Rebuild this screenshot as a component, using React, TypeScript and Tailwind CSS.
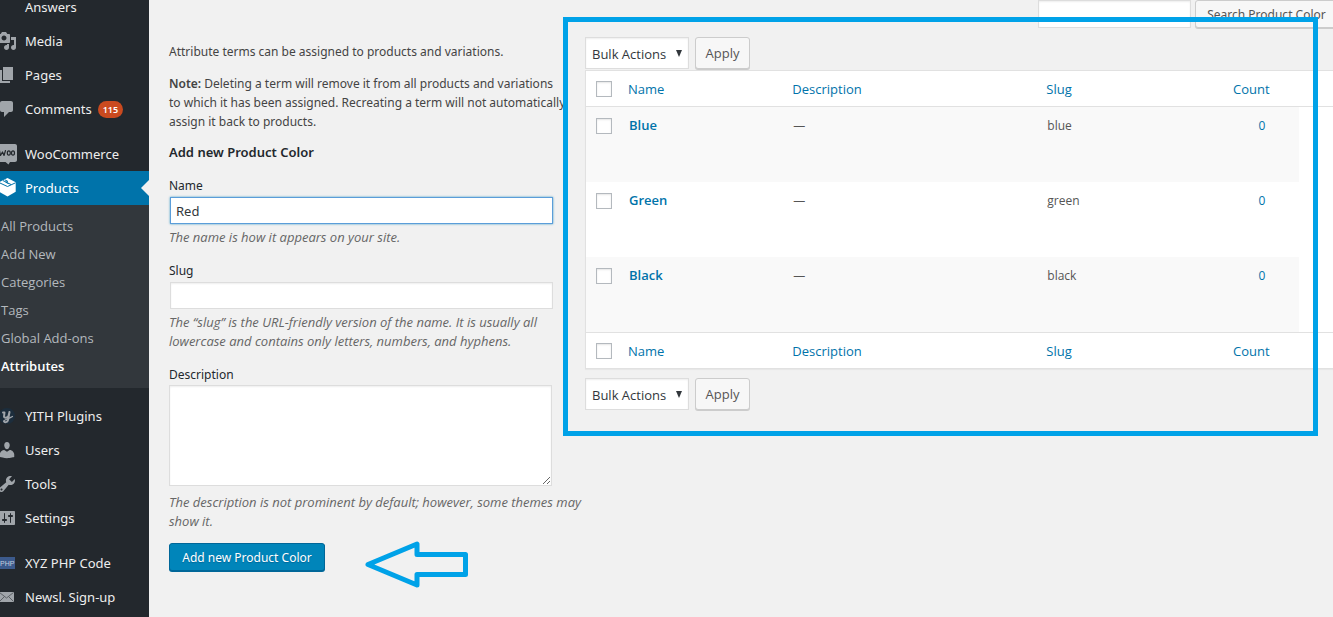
import type { ReactNode } from "react";

const path = (d: string) => <path fill="currentColor" fillRule="evenodd" d={d} />;

const icons: Record<string, ReactNode> = {
  media: path(
    "M13 11V4c0-.55-.45-1-1-1h-1.67L9 1H5L3.67 3H2c-.55 0-1 .45-1 1v7c0 .55.45 1 1 1h10c.55 0 1-.45 1-1zM7 4.5c1.38 0 2.5 1.12 2.5 2.5S8.38 9.5 7 9.5 4.5 8.38 4.5 7 5.62 4.5 7 4.5zM14 6h5v10.5c0 1.38-1.12 2.5-2.5 2.5S14 17.88 14 16.5s1.12-2.5 2.5-2.5c.17 0 .34.02.5.05V9h-3V6zm-4 8.05V13h2v3.5c0 1.38-1.12 2.5-2.5 2.5S7 17.88 7 16.5 8.12 14 9.5 14c.17 0 .34.02.5.05z",
  ),
  pages: path("M6 15V2h10v13H6zm-1 1h8v2H3V5h2v11z"),
  comments: path("M5 2h9c1.1 0 2 .9 2 2v7c0 1.1-.9 2-2 2h-2l-5 5v-5H5c-1.1 0-2-.9-2-2V4c0-1.1.9-2 2-2z"),
  woo: (
    <>
      <path fill="currentColor" d="M2 0h16c1.1 0 2 .9 2 2v14c0 1.1-.9 2-2 2h-5l-1.5 2.5L8.500 18H2c-1.1 0-2-.9-2-2V2C0 .9.9 0 2 0z" />
      <g fill="none" stroke="#23282d" strokeWidth="1.2" strokeLinejoin="round" strokeLinecap="round">
        <path d="M2.500 6.500l1 5 2-3.500 1.500 3.500L8.500 6.500" />
        <ellipse cx="11.8" cy="9" rx="1.5" ry="2.2" />
        <ellipse cx="16" cy="9" rx="1.5" ry="2.2" />
      </g>
    </>
  ),
  products: (
    <>
      <path fill="currentColor" d="M10.500 0L18.700 4.200v9.600L10.500 18.500 2.300 13.800V4.200z" />
      <path fill="none" stroke="#0073aa" strokeWidth="1" d="M2.500 4.800l8 3.700 8-3.700M6 2.600l8 3.900M7.800 1.800l3 1.500-2 1 3 1.400" />
    </>
  ),
  yith: (
    <>
      <circle cx="10" cy="10" r="8" fill="#1c2d3c" />
      <path
        fill="none"
        stroke="currentColor"
        strokeWidth="2"
        strokeLinecap="round"
        strokeLinejoin="round"
        d="M6 6.500h1.500l-.5 4c0 1.800 3.500 1.500 4.500-.5L12.500 6l-1.500 8c-.5 2.500-3.500 2.800-4 1.200"
      />
      <path fill="none" stroke="currentColor" strokeWidth="1.2" strokeLinecap="round" d="M7 15c.2-1.200 4-2 8.500-4.500" />
    </>
  ),
  users: path(
    "M10 9.250c-2.270 0-2.730-3.440-2.730-3.440C7 4.020 7.820 2 9.970 2c2.160 0 2.980 2.020 2.710 3.810 0 0-.41 3.440-2.680 3.440zm0 2.570L12.720 10c2.390 0 4.520 2.330 4.520 4.530v2.490s-3.650 1.130-7.240 1.130c-3.650 0-7.240-1.130-7.240-1.130v-2.490c0-2.250 1.940-4.480 4.470-4.480z",
  ),
  tools: path(
    "M16.680 9.770c-1.340 1.340-3.300 1.670-4.950.99l-5.410 6.520c-.99.99-2.590.99-3.580 0s-.99-2.590 0-3.570l6.520-5.420c-.68-1.650-.35-3.610.99-4.950 1.280-1.280 3.120-1.620 4.720-1.060l-2.890 2.890 2.820 2.820 2.860-2.870c.53 1.580.18 3.390-1.080 4.650zM3.810 16.210c.4.39 1.040.39 1.430 0 .4-.4.4-1.040 0-1.430-.39-.4-1.030-.4-1.430 0-.39.39-.39 1.030 0 1.430z",
  ),
  settings: path(
    "M18 16V4c0-.55-.45-1-1-1H3c-.55 0-1 .45-1 1v12c0 .55.45 1 1 1h14c.55 0 1-.45 1-1zM8 11h1c.55 0 1 .45 1 1s-.45 1-1 1H8v1.500c0 .28-.22.5-.5.5s-.5-.22-.5-.5V13H6c-.55 0-1-.45-1-1s.45-1 1-1h1V5.500c0-.28.22-.5.5-.5s.5.22.5.5V11zm5-2h-1c-.55 0-1-.45-1-1s.45-1 1-1h1V5.500c0-.28.22-.5.5-.5s.5.22.5.5V7h1c.55 0 1 .45 1 1s-.45 1-1 1h-1v5.500c0 .28-.22.5-.5.5s-.5-.22-.5-.5V9z",
  ),
  php: (
    <>
      <rect x="0" y="4" width="18" height="12" fill="#3c5a8c" />
      <text x="3" y="13" fontSize="7" fontFamily="Liberation Sans, sans-serif" fill="#c4cede">PHP</text>
    </>
  ),
  mail: (
    <>
      <rect x="2" y="5" width="15" height="10" fill="currentColor" />
      <path fill="none" stroke="#5b6065" d="M2.500 5.500l7 5.500 7-5.500M2.500 14.500l5-5M16.500 14.500l-5-5" />
    </>
  ),
};

function MenuItem({ icon, label, badge, active }: { icon?: string; label: string; badge?: string; active?: boolean }) {
  return (
    <li>
      <a
        href="#"
        className={
          active
            ? "relative flex h-[34px] items-center gap-2 bg-[#0073aa] text-white"
            : "relative flex h-[34px] items-center gap-2 text-[#eeeeee]"
        }
      >
        <svg
          viewBox="0 0 20 20"
          aria-hidden="true"
          className={
            active
              ? "-ml-[3px] size-5 shrink-0 overflow-visible"
              : "-ml-[3px] size-5 shrink-0 overflow-visible text-[#a0a5aa]"
          }
        >
          {icon ? icons[icon] : null}
        </svg>
        <span className="leading-[14px] whitespace-nowrap">{label}</span>
        {badge && (
          <span className="-ml-[2px] rounded-full bg-[#ca4a1f] px-[5px] text-[9px] leading-[17px] font-semibold text-white">
            {badge}
          </span>
        )}
        {active && (
          <span className="absolute top-1/2 right-0 -translate-y-1/2 border-y-8 border-r-8 border-y-transparent border-r-[#f1f1f1]" />
        )}
      </a>
    </li>
  );
}

const submenu = ["All Products", "Add New", "Categories", "Tags", "Global Add-ons"];

function Sidebar() {
  return (
    <nav
      aria-label="Admin menu"
      className="w-[149px] shrink-0 overflow-hidden bg-[#23282d] font-['Noto_Sans',sans-serif] text-[13px]"
    >
      <ul className="-mt-[10px]">
        <MenuItem label="Answers" />
        <MenuItem icon="media" label="Media" />
        <MenuItem icon="pages" label="Pages" />
        <MenuItem icon="comments" label="Comments" badge="115" />
      </ul>
      <ul className="mt-[11px]">
        <MenuItem icon="woo" label="WooCommerce" />
        <MenuItem icon="products" label="Products" active />
        <li>
          <ul className="bg-[#32373c] pt-[7px] pb-2 pl-px font-['Open_Sans',sans-serif] text-[13px] leading-7 text-[#b4b9be]">
            {submenu.map((s) => (
              <li key={s}>
                <a href="#">{s}</a>
              </li>
            ))}
            <li>
              <a href="#" className="font-semibold text-white">
                Attributes
              </a>
            </li>
          </ul>
        </li>
      </ul>
      <ul className="mt-[11px]">
        <MenuItem icon="yith" label="YITH Plugins" />
        <MenuItem icon="users" label="Users" />
        <MenuItem icon="tools" label="Tools" />
        <MenuItem icon="settings" label="Settings" />
      </ul>
      <ul className="mt-[11px]">
        <MenuItem icon="php" label="XYZ PHP Code" />
        <MenuItem icon="mail" label="Newsl. Sign-up" />
      </ul>
    </nav>
  );
}

function AddForm() {
  return (
    <section className="w-[404px] shrink-0 pt-[42px] font-['Noto_Sans',sans-serif] text-[12px] leading-[19px] whitespace-nowrap text-[#444444]">
      <p>Attribute terms can be assigned to products and variations.</p>
      <p className="mt-[13px]">
        <strong className="font-semibold">Note:</strong> Deleting a term will remove it from all products and variations
        <br />
        to which it has been assigned. Recreating a term will not automatically
        <br />
        assign it back to products.
      </p>
      <h2 className="mt-3 text-[13px] font-semibold text-[#23282d]">Add new Product Color</h2>
      <form onSubmit={(e) => e.preventDefault()}>
        <label htmlFor="tag-name" className="mt-[14px] block text-[#23282d]">
          Name
        </label>
        <input
          id="tag-name"
          defaultValue="Red"
          className="mt-0.5 ml-px block h-[27px] w-[383px] border border-[#5b9dd9] bg-white px-[5px] text-[13px] text-[#32373c] shadow-[0_0_2px_rgba(30,140,190,0.8)] outline-none"
        />
        <p className="mt-1 font-['Open_Sans',sans-serif] text-[13px] text-[#666666] italic">
          The name is how it appears on your site.
        </p>

        <label htmlFor="tag-slug" className="mt-[14px] block text-[#23282d]">
          Slug
        </label>
        <input
          id="tag-slug"
          className="mt-0.5 ml-px block h-[27px] w-[383px] border border-[#dddddd] bg-white px-[5px] text-[13px] text-[#32373c] shadow-[inset_0_1px_2px_rgba(0,0,0,0.07)] outline-none"
        />
        <p className="mt-1 font-['Open_Sans',sans-serif] text-[13px] text-[#666666] italic">
          The “slug” is the URL-friendly version of the name. It is usually all
          <br />
          lowercase and contains only letters, numbers, and hyphens.
        </p>

        <label htmlFor="tag-description" className="mt-[14px] block text-[#23282d]">
          Description
        </label>
        <textarea
          id="tag-description"
          className="mt-px block h-[101px] w-[383px] resize border border-[#dddddd] bg-white px-[5px] text-[13px] text-[#32373c] shadow-[inset_0_1px_2px_rgba(0,0,0,0.07)] outline-none"
        />
        <p className="mt-[7px] font-['Open_Sans',sans-serif] text-[13px] text-[#666666] italic">
          The description is not prominent by default; however, some themes may
          <br />
          show it.
        </p>
        <div className="mt-3 flex items-start gap-10">
          <button
            type="submit"
            className="h-7 w-[156px] rounded-[3px] border border-[#006799] bg-[#0085ba] text-[12px] text-white shadow-[0_1px_0_#006799] [text-shadow:0_1px_1px_#006799]"
          >
            Add new Product Color
          </button>
          <svg viewBox="0 0 104 48" aria-hidden="true" className="-mt-[3px] h-12 w-[104px]">
            <path
              d="M3 24.500L52 4v10.500h48.500v20H52v10.500z"
              fill="none"
              stroke="#00a2e8"
              strokeWidth="5"
              strokeLinejoin="round"
            />
          </svg>
        </div>
      </form>
    </section>
  );
}

function BulkActions({ label }: { label: string }) {
  return (
    <div className="flex h-8 gap-1.5">
      <div className="relative w-[104px]">
        <select
          aria-label={label}
          className="h-8 w-full appearance-none border border-[#dddddd] bg-white pt-[3px] pl-1.5 text-[13px] text-[#32373c] shadow-[inset_0_1px_2px_rgba(0,0,0,0.07)] outline-none"
        >
          <option>Bulk Actions</option>
        </select>
        <svg
          viewBox="0 0 6 7"
          aria-hidden="true"
          className="pointer-events-none absolute top-[13px] right-[7px] h-[7px] w-1.5"
        >
          <path d="M0 0h6L3 7z" fill="#32373c" />
        </svg>
      </div>
      <button
        type="button"
        className="w-[55px] rounded-[3px] border border-[#cccccc] bg-[#f7f7f7] pt-0.5 text-[13px] text-[#555555] shadow-[0_1px_0_#cccccc]"
      >
        Apply
      </button>
    </div>
  );
}

function Check({ label }: { label: string }) {
  return (
    <input
      type="checkbox"
      aria-label={label}
      className="ml-[10px] block size-4 appearance-none border border-[#b4b9be] bg-white shadow-[inset_0_1px_2px_rgba(0,0,0,0.1)]"
    />
  );
}

function HeadingRow({ label }: { label: string }) {
  return (
    <tr className="h-9 text-left text-[13px] text-[#0073aa]">
      <td>
        <Check label={label} />
      </td>
      {["Name", "Description", "Slug", "Count"].map((h) => (
        <th key={h} scope="col" className="px-2 pt-0.5 font-normal">
          <a href="#">{h}</a>
        </th>
      ))}
      <td />
    </tr>
  );
}

const terms = [
  { name: "Blue", slug: "blue" },
  { name: "Green", slug: "green" },
  { name: "Black", slug: "black" },
];

function TermsTable() {
  return (
    <table className="w-full table-fixed border-separate border-spacing-0 border-y border-l border-[#e1e1e1] bg-white text-[12px] leading-[19px] text-[#555555] shadow-[0_1px_1px_rgba(0,0,0,0.04)]">
      <colgroup>
        <col className="w-[34px]" />
        <col className="w-[22%]" />
        <col className="w-[34%]" />
        <col className="w-[25%]" />
        <col className="w-[74px]" />
        <col />
      </colgroup>
      <thead className="[&_td]:border-b [&_td]:border-[#e1e1e1] [&_th]:border-b [&_th]:border-[#e1e1e1]">
        <HeadingRow label="Select all" />
      </thead>
      <tbody>
        {terms.map((t, i) => {
          const cell = i % 2 === 0 ? "bg-[#f9f9f9] px-[9px] pt-[9px] align-top" : "px-[9px] pt-[9px] align-top";
          return (
            <tr key={t.slug} className="h-[75px]">
              <td className={i % 2 === 0 ? "bg-[#f9f9f9] pt-[11px] align-top" : "pt-[11px] align-top"}>
                <Check label={`Select ${t.name}`} />
              </td>
              <td className={cell}>
                <a href="#" className="text-[13px] font-semibold text-[#0073aa]">
                  {t.name}
                </a>
              </td>
              <td className={cell}>—</td>
              <td className={cell}>{t.slug}</td>
              <td className={cell}>
                <a href="#" className="block text-center text-[#0073aa]">
                  0
                </a>
              </td>
              <td />
            </tr>
          );
        })}
      </tbody>
      <tfoot className="[&_td]:border-t [&_td]:border-[#e1e1e1] [&_th]:border-t [&_th]:border-[#e1e1e1]">
        <HeadingRow label="Select all terms" />
      </tfoot>
    </table>
  );
}

export default function App() {
  return (
    <div className="flex min-h-screen overflow-hidden bg-[#f1f1f1] font-['Open_Sans','Noto_Sans',sans-serif]">
      <Sidebar />
      <main className="flex min-w-0 flex-1 gap-3 pl-5">
        <AddForm />
        <section className="min-w-0 flex-1">
          <form className="flex h-7 justify-end gap-1" onSubmit={(e) => e.preventDefault()}>
            <input
              type="search"
              aria-label="Search Product Color"
              className="w-[153px] border border-[#dddddd] bg-white px-1.5 text-[13px] shadow-[inset_0_1px_2px_rgba(0,0,0,0.07)] outline-none"
            />
            <button
              type="submit"
              className="-mr-[5px] w-[143px] shrink-0 rounded-[3px] border border-[#cccccc] bg-[#f7f7f7] pt-0.5 font-['Noto_Sans',sans-serif] text-[12px] whitespace-nowrap text-[#555555] shadow-[0_1px_0_#cccccc]"
            >
              Search Product Color
            </button>
          </form>
          <div className="relative pt-[9px]">
            <BulkActions label="Bulk actions" />
            <div className="mt-px mb-[9px]">
              <TermsTable />
            </div>
            <BulkActions label="Bulk actions, bottom" />
            <div className="pointer-events-none absolute -top-[11px] right-[15px] -bottom-[26px] -left-[22px] border-[5px] border-[#00a2e8]" />
          </div>
        </section>
      </main>
    </div>
  );
}
